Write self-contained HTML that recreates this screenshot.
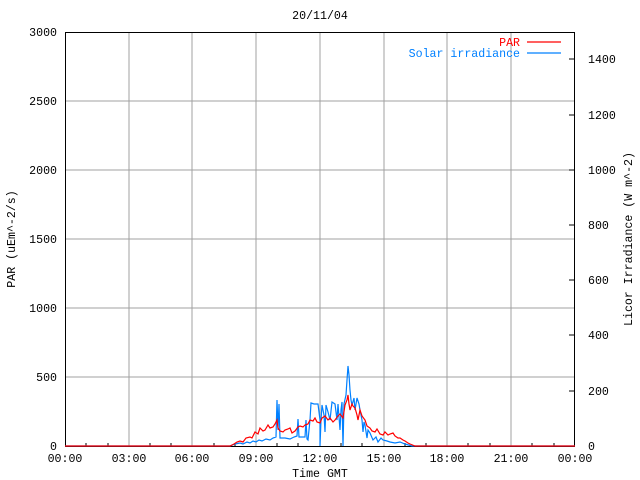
<!DOCTYPE html>
<html><head><meta charset="utf-8"><style>
html,body{margin:0;padding:0;background:#fff;}
svg{display:block;}
text{font-family:"Liberation Mono","DejaVu Sans Mono",monospace;font-size:11.6px;fill:#000;}
</style></head><body>
<svg width="640" height="480" xmlns="http://www.w3.org/2000/svg" shape-rendering="crispEdges">
<g stroke="#a0a0a0" stroke-width="1">
<line x1="129" y1="32" x2="129" y2="446"/><line x1="192" y1="32" x2="192" y2="446"/><line x1="256" y1="32" x2="256" y2="446"/><line x1="320" y1="32" x2="320" y2="446"/><line x1="384" y1="32" x2="384" y2="446"/><line x1="447" y1="32" x2="447" y2="446"/><line x1="511" y1="32" x2="511" y2="446"/>
<line x1="65" y1="101" x2="575" y2="101"/><line x1="65" y1="170" x2="575" y2="170"/><line x1="65" y1="239" x2="575" y2="239"/><line x1="65" y1="308" x2="575" y2="308"/><line x1="65" y1="377" x2="575" y2="377"/>
</g>
<g stroke="#000" stroke-width="1">
<line x1="86" y1="446" x2="86" y2="443"/><line x1="108" y1="446" x2="108" y2="443"/><line x1="150" y1="446" x2="150" y2="443"/><line x1="171" y1="446" x2="171" y2="443"/><line x1="214" y1="446" x2="214" y2="443"/><line x1="235" y1="446" x2="235" y2="443"/><line x1="277" y1="446" x2="277" y2="443"/><line x1="298" y1="446" x2="298" y2="443"/><line x1="341" y1="446" x2="341" y2="443"/><line x1="362" y1="446" x2="362" y2="443"/><line x1="405" y1="446" x2="405" y2="443"/><line x1="426" y1="446" x2="426" y2="443"/><line x1="468" y1="446" x2="468" y2="443"/><line x1="490" y1="446" x2="490" y2="443"/><line x1="532" y1="446" x2="532" y2="443"/><line x1="554" y1="446" x2="554" y2="443"/>
<line x1="569" y1="391" x2="575" y2="391"/><line x1="569" y1="335" x2="575" y2="335"/><line x1="569" y1="280" x2="575" y2="280"/><line x1="569" y1="225" x2="575" y2="225"/><line x1="569" y1="170" x2="575" y2="170"/><line x1="569" y1="115" x2="575" y2="115"/><line x1="569" y1="59" x2="575" y2="59"/>
</g>
<rect x="65.5" y="32.5" width="509" height="414" fill="none" stroke="#000"/>
<g shape-rendering="auto" fill="none" stroke-width="1.2">
<polyline stroke="#0080ff" points="65,446 230,446 235,444 240,443 243,444 247,442 250,443 253,441 256,442 259,440 262,441 266,439 270,440 273,438 276,437 277,400 278,430 279,404 280,438 285,438 290,439 294,437 297,436 298,419 299,437 302,437 305,437 306,420 307,439 308,440 310,420 311,403 314,404 318,404 319,412 320,420 320,446 321,420 322,405 324,415 325,432 326,405 328,412 330,420 332,402 335,404 337,420 338,404 340,430 341,410 342,402 343,446 344,404 346,395 347,380 348,366 349,375 350,390 351,400 352,405 354,398 355,410 357,398 359,404 360,410 362,420 363,432 364,422 365,425 367,438 368,430 370,433 373,440 376,437 378,442 381,438 383,440 387,441 390,442 395,443 400,442 405,444 412,446 575,446"/>
<polyline stroke="#ff0000" points="65,446 230,446 234,444 237,442 240,441 243,442 246,438 250,437 252,438 255,432 258,434 260,428 263,431 265,430 268,425 270,428 273,427 275,424 277,420 278,428 280,431 283,432 285,430 288,429 290,428 292,433 295,431 298,427 300,426 303,427 305,425 308,424 310,420 313,421 315,418 317,422 320,423 322,418 325,416 328,420 330,418 333,422 335,420 338,416 340,414 343,418 345,405 347,400 348,395 349,404 350,410 352,404 353,406 355,408 357,415 358,420 360,410 362,416 365,420 367,426 370,428 372,431 375,432 377,429 380,434 383,435 385,432 388,435 390,434 393,433 395,436 398,438 400,438 403,440 405,441 408,443 410,444 415,446 575,446"/>
<line x1="527" y1="42" x2="561" y2="42" stroke="#ff0000"/>
<line x1="527" y1="53" x2="561" y2="53" stroke="#0080ff"/>
</g>
<text x="320" y="19" text-anchor="middle">20/11/04</text>
<text x="520" y="46" text-anchor="end" style="fill:#ff0000">PAR</text>
<text x="520" y="57" text-anchor="end" style="fill:#0080ff">Solar irradiance</text>
<g text-anchor="end">
<text x="57" y="36">3000</text><text x="57" y="105">2500</text><text x="57" y="174">2000</text><text x="57" y="243">1500</text><text x="57" y="312">1000</text><text x="57" y="381">500</text><text x="57" y="450">0</text>
</g>
<g>
<text x="588" y="450">0</text><text x="588" y="395">200</text><text x="588" y="339">400</text><text x="588" y="284">600</text><text x="588" y="229">800</text><text x="588" y="174">1000</text><text x="588" y="63">1400</text><text x="588" y="119">1200</text>
</g>
<g text-anchor="middle">
<text x="65" y="462">00:00</text><text x="129" y="462">03:00</text><text x="192" y="462">06:00</text><text x="256" y="462">09:00</text><text x="320" y="462">12:00</text><text x="384" y="462">15:00</text><text x="447" y="462">18:00</text><text x="511" y="462">21:00</text><text x="575" y="462">00:00</text>
<text x="320" y="477">Time GMT</text>
</g>
<text transform="translate(15,239) rotate(-90)" text-anchor="middle">PAR (uEm^-2/s)</text>
<text transform="translate(632,239) rotate(-90)" text-anchor="middle">Licor Irradiance (W m^-2)</text>
</svg>
</body></html>
